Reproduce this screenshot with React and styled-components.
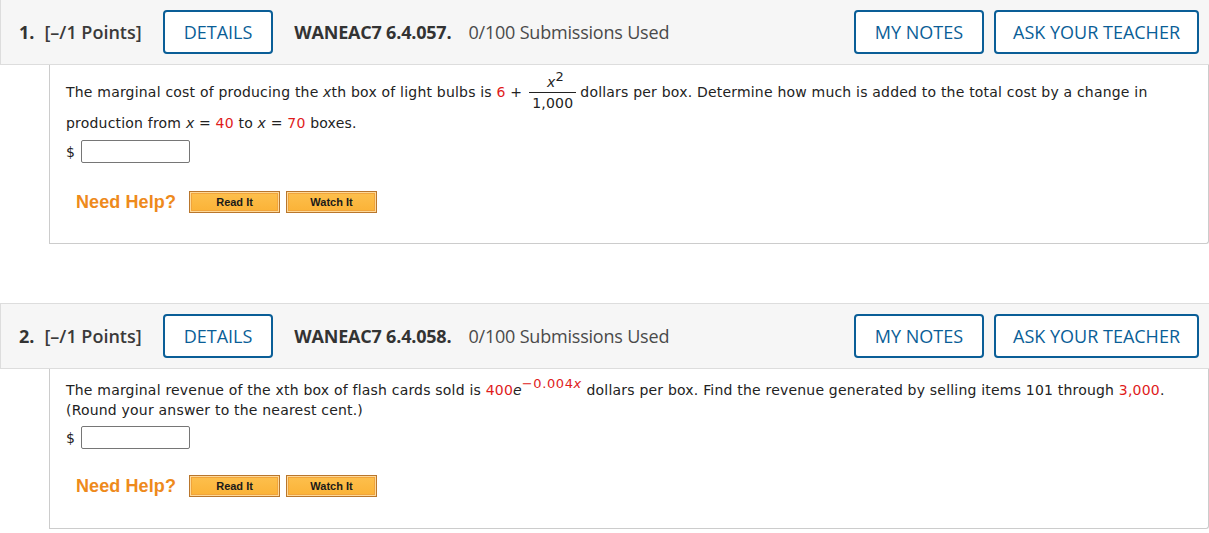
import styled, { createGlobalStyle } from 'styled-components'

const Global = createGlobalStyle`
  body {
    margin: 0;
    background: #fff;
  }
`

const Page = styled.div`
  width: 1209px;
`

const Question = styled.section`
  margin-bottom: ${p => p.$mb || 0}px;
`

const Header = styled.div`
  height: ${p => (p.$top ? 66 : 65)}px;
  display: flex;
  align-items: center;
  padding: 0 10px 0 18px;
  background: #f6f6f6;
  border-top: ${p => (p.$top ? '1px solid #ddd' : 'none')};
  border-bottom: 1px solid #ddd;
  border-left: 1px solid #ddd;
  font-family: "Open Sans", sans-serif;
  font-size: 18px;
  color: #333;
  box-sizing: border-box;
`

const Num = styled.span`
  font-weight: 700;
  margin-right: 10px;
`

const Points = styled.span`
  font-weight: 600;
  color: #3a3a3a;
  margin-right: 21px;
`

const Title = styled.span`
  font-weight: 700;
  margin-left: 21px;
  margin-right: 17px;
  letter-spacing: -0.2px;
`

const Used = styled.span`
  color: #4a4a4a;
  flex: 1;
  letter-spacing: -0.2px;
`

const HeadButton = styled.button`
  height: 44px;
  padding: 0 ${p => p.$pad || 19}px;
  margin-left: ${p => p.$ml || 0}px;
  background: #fff;
  border: 2px solid #0a5e97;
  border-radius: 4px;
  font-family: "Open Sans", sans-serif;
  font-size: 18px;
  color: #0a5e97;
  box-sizing: border-box;
  cursor: pointer;
`

const Body = styled.div`
  margin-left: 49px;
  border: 1px solid #ccc;
  border-top: none;
  border-radius: 0 0 3px 0;
  padding: ${p => p.$pt}px 16px 0 16px;
  height: ${p => p.$h}px;
  box-sizing: border-box;
  font-family: "DejaVu Sans", Verdana, sans-serif;
  font-size: 14px;
  letter-spacing: 0.2px;
  color: #222;
`

const Text = styled.p`
  margin: 0;
  line-height: 20px;
`

const Red = styled.span`
  color: #e01b1b;
`

const Ital = styled.i``

const Frac = styled.span`
  display: inline-flex;
  flex-direction: column;
  align-items: center;
  vertical-align: middle;
  margin: 0 4px 0 7px;
`

const Numer = styled.span`
  align-self: stretch;
  text-align: center;
  border-bottom: 1px solid #222;
  line-height: 19px;
  height: 19px;
  padding-left: 6px;
`

const Denom = styled.span`
  line-height: 20px;
  padding: 0 3px;
`

const Sup = styled.sup`
  font-size: ${p => p.$fs || 13}px;
  vertical-align: ${p => p.$va || 7}px;
  letter-spacing: ${p => p.$ls || 0.6}px;
  line-height: 0;
`

const AnswerRow = styled.div`
  display: flex;
  align-items: center;
  margin-top: ${p => p.$mt}px;
`

const Dollar = styled.span`
  width: 15px;
`

const Input = styled.input`
  width: 109px;
  height: 23px;
  box-sizing: border-box;
  border: 1px solid #767676;
  border-radius: 2px;
  padding: 0;
`

const HelpRow = styled.div`
  display: flex;
  align-items: center;
  margin-top: ${p => p.$mt}px;
  padding-left: 10px;
`

const Help = styled.span`
  font-family: "Liberation Sans", Arial, sans-serif;
  font-weight: 700;
  font-size: 18px;
  letter-spacing: 0.1px;
  color: #ee8a1c;
  margin-right: 13px;
`

const HelpButton = styled.button`
  width: ${p => p.$w}px;
  height: 22px;
  margin-right: 6px;
  padding: 0;
  background: linear-gradient(#fdc04e, #fbb236);
  border: 1px solid #b9762c;
  box-shadow: inset 0 0 0 1px #fdd99a, inset 0 0 0 2px #f1a43a;
  font-family: "Liberation Sans", Arial, sans-serif;
  font-weight: 700;
  font-size: 11px;
  color: #1a1a1a;
  cursor: pointer;
`

const QHeader = ({ n, code, top }) => (
  <Header $top={top}>
    <Num>{n}.</Num>
    <Points>[–/1 Points]</Points>
    <HeadButton>DETAILS</HeadButton>
    <Title>{code}</Title>
    <Used>0/100 Submissions Used</Used>
    <HeadButton $pad={19}>MY NOTES</HeadButton>
    <HeadButton $ml={10} $pad={17}>ASK YOUR TEACHER</HeadButton>
  </Header>
)

const HelpBar = ({ mt }) => (
  <HelpRow $mt={mt}>
    <Help>Need Help?</Help>
    <HelpButton $w={91}>Read It</HelpButton>
    <HelpButton $w={91}>Watch It</HelpButton>
  </HelpRow>
)

export default function App() {
  return (
    <Page>
      <Global />
      <Question $mb={59}>
        <QHeader n={1} code="WANEAC7 6.4.057." />
        <Body $pt={8} $h={179}>
          <Text>
            The marginal cost of producing the <Ital>x</Ital>th box of light bulbs is <Red>6</Red> +
            <Frac>
              <Numer><Ital>x</Ital><Sup $fs={13} $va={6} $ls={0}>2</Sup></Numer>
              <Denom>1,000</Denom>
            </Frac>
            dollars per box. Determine how much is added to the total cost by a change in production from{' '}
            <Ital>x</Ital> = <Red>40</Red> to <Ital>x</Ital> = <Red>70</Red> boxes.
          </Text>
          <AnswerRow $mt={7}>
            <Dollar>$</Dollar>
            <Input />
          </AnswerRow>
          <HelpBar mt={28} />
        </Body>
      </Question>
      <Question>
        <QHeader n={2} code="WANEAC7 6.4.058." top />
        <Body $pt={11} $h={160}>
          <Text>
            The marginal revenue of the xth box of flash cards sold is <Red>400</Red><Ital>e</Ital>
            <Sup><Red>−0.004<Ital>x</Ital></Red></Sup> dollars per box. Find the revenue generated by selling
            items 101 through <Red>3,000</Red>.
            <br />
            (Round your answer to the nearest cent.)
          </Text>
          <AnswerRow $mt={6}>
            <Dollar>$</Dollar>
            <Input />
          </AnswerRow>
          <HelpBar mt={26} />
        </Body>
      </Question>
    </Page>
  )
}
